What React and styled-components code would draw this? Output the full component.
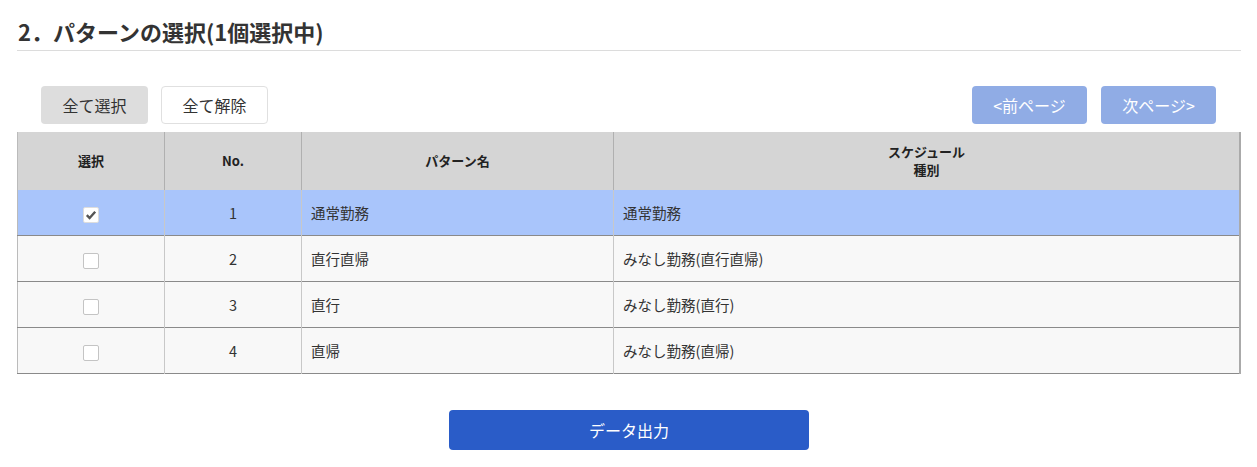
import React from "react";
import styled, { createGlobalStyle } from "styled-components";

const Global = createGlobalStyle`
  html, body { margin: 0; padding: 0; background: #fff; }
  body { font-family: "Noto Sans CJK JP", "Noto Sans", sans-serif; color: #333; }
`;

const Page = styled.div`
  padding: 0 16px 0 17px;
`;

const Title = styled.h2`
  margin: 0;
  padding: 17px 0 5px 1px;
  font-size: 22px;
  line-height: 28px;
  font-weight: 700;
  color: #333;
  border-bottom: 1px solid #dcdcdc;
`;

const Toolbar = styled.div`
  display: flex;
  align-items: center;
  justify-content: space-between;
  margin-top: 35px;
  padding: 0 25px 0 24px;
  margin-bottom: 8px;
`;

const Group = styled.div`
  display: flex;
  gap: ${(p) => p.$gap}px;
`;

const Btn = styled.button`
  font-family: inherit;
  font-size: 16px;
  height: 38px;
  width: ${(p) => p.$w}px;
  border-radius: 4px;
  padding: 0;
  cursor: pointer;
  border: 1px solid ${(p) => (p.$variant === "outline" ? "#e0e0e0" : "transparent")};
  background: ${(p) =>
    p.$variant === "gray" ? "#dddddd" : p.$variant === "page" ? "#90ace5" : "#fff"};
  color: ${(p) => (p.$variant === "page" ? "#fff" : "#333")};
`;

const Table = styled.table`
  width: 100%;
  border-collapse: collapse;
  border-left: 1px solid #bbb;
  border-right: 2px solid #aaa;
  font-size: 14.5px;
`;

const Th = styled.th`
  background: #d5d5d5;
  height: 58px;
  padding: 0;
  font-size: 13px;
  font-weight: 700;
  color: #222;
  line-height: 18px;
  text-align: center;
  width: ${(p) => p.$w || "auto"};
  border-left: 1px solid #b0b0b0;
  &:first-child { border-left: none; }
`;

const Tr = styled.tr`
  background: ${(p) => (p.$selected ? "#a9c5fb" : "#f8f8f8")};
  border-bottom: 1px solid #8a8a8a;
`;

const Td = styled.td`
  height: 45px;
  padding: 0 0 0 ${(p) => (p.$center ? 0 : 9)}px;
  text-align: ${(p) => (p.$center ? "center" : "left")};
  color: #333;
  border-left: 1px solid #c8c8c8;
  &:first-child { border-left: none; }
`;

const Check = styled.span`
  display: inline-flex;
  align-items: center;
  justify-content: center;
  width: 16px;
  height: 16px;
  box-sizing: border-box;
  background: #fff;
  border: 1px solid ${(p) => (p.$checked ? "#ddd" : "#c4c4c4")};
  border-radius: 2px;
  vertical-align: middle;
`;

const Footer = styled.div`
  display: flex;
  justify-content: center;
  padding-top: 36px;
`;

const OutBtn = styled.button`
  font-family: inherit;
  width: 360px;
  height: 40px;
  border: none;
  border-radius: 4px;
  background: #2a5cc8;
  color: #fff;
  font-size: 16px;
  cursor: pointer;
`;

const rows = [
  { no: 1, name: "通常勤務", kind: "通常勤務", checked: true },
  { no: 2, name: "直行直帰", kind: "みなし勤務(直行直帰)" },
  { no: 3, name: "直行", kind: "みなし勤務(直行)" },
  { no: 4, name: "直帰", kind: "みなし勤務(直帰)" },
];

function CheckBox({ checked }) {
  return (
    <Check $checked={checked}>
      {checked && (
        <svg width="12" height="12" viewBox="0 0 12 12">
          <path d="M1.8 6.2 L4.6 9 L10.2 2.8" fill="none" stroke="#555" strokeWidth="2.4" />
        </svg>
      )}
    </Check>
  );
}

export default function App() {
  return (
    <Page>
      <Global />
      <Title>2．パターンの選択(1個選択中)</Title>
      <Toolbar>
        <Group $gap={13}>
          <Btn $variant="gray" $w={107}>全て選択</Btn>
          <Btn $variant="outline" $w={107}>全て解除</Btn>
        </Group>
        <Group $gap={14}>
          <Btn $variant="page" $w={115}>&lt;前ページ</Btn>
          <Btn $variant="page" $w={115}>次ページ&gt;</Btn>
        </Group>
      </Toolbar>
      <Table>
        <thead>
          <tr>
            <Th $w="146px">選択</Th>
            <Th $w="136px">No.</Th>
            <Th $w="311px">パターン名</Th>
            <Th>スケジュール<br />種別</Th>
          </tr>
        </thead>
        <tbody>
          {rows.map((r) => (
            <Tr key={r.no} $selected={r.checked}>
              <Td $center><CheckBox checked={r.checked} /></Td>
              <Td $center>{r.no}</Td>
              <Td>{r.name}</Td>
              <Td>{r.kind}</Td>
            </Tr>
          ))}
        </tbody>
      </Table>
      <Footer>
        <OutBtn>データ出力</OutBtn>
      </Footer>
    </Page>
  );
}
